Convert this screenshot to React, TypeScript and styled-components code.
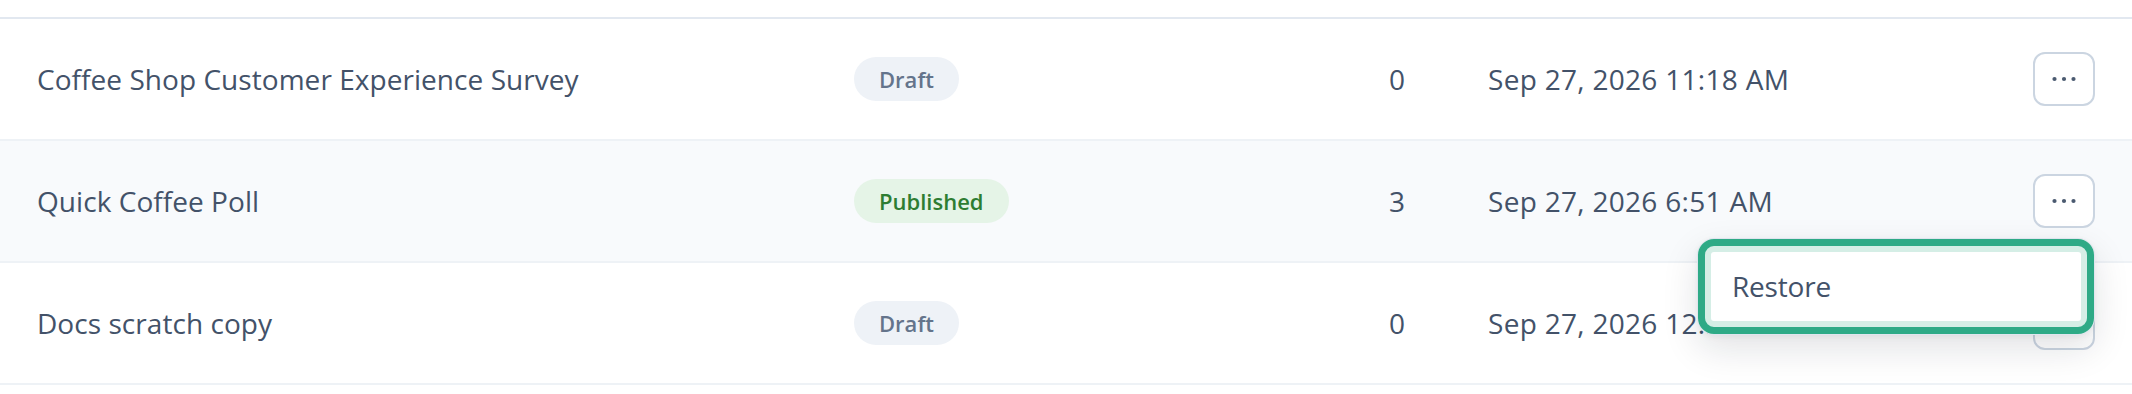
import React from "react";
import styled, { createGlobalStyle } from "styled-components";

const Global = createGlobalStyle`
  html, body { margin: 0; padding: 0; background: #ffffff; }
  body { font-family: "Open Sans", "Noto Sans", sans-serif; }
`;

const Table = styled.div`
  width: 2132px;
  padding-top: 17px;
`;

const HeaderRule = styled.div`
  height: 2px;
  background: #e2e8f0;
`;

const Row = styled.div<{ $hover?: boolean; $raised?: boolean }>`
  position: relative;
  z-index: ${(p) => (p.$raised ? 2 : 1)};
  display: grid;
  grid-template-columns: 817px 535px 99px 1fr 62px;
  align-items: center;
  height: 120px;
  padding: 0 37px;
  border-bottom: 2px solid #eef2f6;
  background: ${(p) => (p.$hover ? "#f8fafc" : "#ffffff")};
`;

const Cell = styled.div`
  font-size: 28px;
  line-height: 38px;
  color: #435269;
  white-space: nowrap;
`;

const Title = styled(Cell)`
  letter-spacing: 0.05px;
`;

const DateCell = styled(Cell)`
  letter-spacing: 0.3px;
`;

const Badge = styled.span<{ $kind: "draft" | "published" }>`
  display: inline-flex;
  align-items: center;
  justify-content: center;
  height: 44px;
  padding: 0 25px;
  border-radius: 22px;
  font-size: 22px;
  font-weight: 600;
  background: ${(p) => (p.$kind === "draft" ? "#eef2f7" : "#e5f4e7")};
  color: ${(p) => (p.$kind === "draft" ? "#64748b" : "#2e7d32")};
`;

const MenuButton = styled.button`
  width: 62px;
  height: 54px;
  box-sizing: border-box;
  border: 2px solid #cbd5e1;
  border-radius: 12px;
  background: #ffffff;
  display: flex;
  align-items: center;
  justify-content: center;
  padding: 0;
`;

const Menu = styled.div`
  position: absolute;
  z-index: 5;
  right: 37px;
  top: 97px;
  width: 398px;
  box-sizing: border-box;
  background: #ffffff;
  border: 1px solid #dfe5ee;
  border-radius: 17px;
  box-shadow: 0 14px 36px rgba(15, 23, 42, 0.12), 0 2px 6px rgba(15, 23, 42, 0.05);
`;

const MenuItem = styled.div`
  border: 7px solid #2eaa86;
  border-radius: 16px;
  box-shadow: inset 0 0 0 6px #d5eee6;
  padding: 21px 27px 22px;
  font-size: 28px;
  line-height: 38px;
  color: #435269;
  letter-spacing: -0.2px;
`;

const Dots = () => (
  <svg width="30" height="8" viewBox="0 0 30 8" aria-hidden>
    <circle cx="5.5" cy="4" r="2.1" fill="#4a5a70" />
    <circle cx="15" cy="4" r="2.1" fill="#4a5a70" />
    <circle cx="24.5" cy="4" r="2.1" fill="#4a5a70" />
  </svg>
);

type Item = {
  title: string;
  status: "draft" | "published";
  count: number;
  date: string;
  hover?: boolean;
  open?: boolean;
};

const items: Item[] = [
  { title: "Coffee Shop Customer Experience Survey", status: "draft", count: 0, date: "Sep 27, 2026 11:18 AM" },
  { title: "Quick Coffee Poll", status: "published", count: 3, date: "Sep 27, 2026 6:51 AM", hover: true, open: true },
  { title: "Docs scratch copy", status: "draft", count: 0, date: "Sep 27, 2026 12:34 AM" },
];

export default function App() {
  return (
    <>
      <Global />
      <Table>
        <HeaderRule />
        {items.map((it) => (
          <Row key={it.title} $hover={it.hover} $raised={it.open}>
            <Title>{it.title}</Title>
            <div>
              <Badge $kind={it.status}>{it.status === "draft" ? "Draft" : "Published"}</Badge>
            </div>
            <Cell>{it.count}</Cell>
            <DateCell>{it.date}</DateCell>
            <MenuButton aria-label="More actions">
              <Dots />
            </MenuButton>
            {it.open && (
              <Menu role="menu">
                <MenuItem role="menuitem">Restore</MenuItem>
              </Menu>
            )}
          </Row>
        ))}
      </Table>
    </>
  );
}
